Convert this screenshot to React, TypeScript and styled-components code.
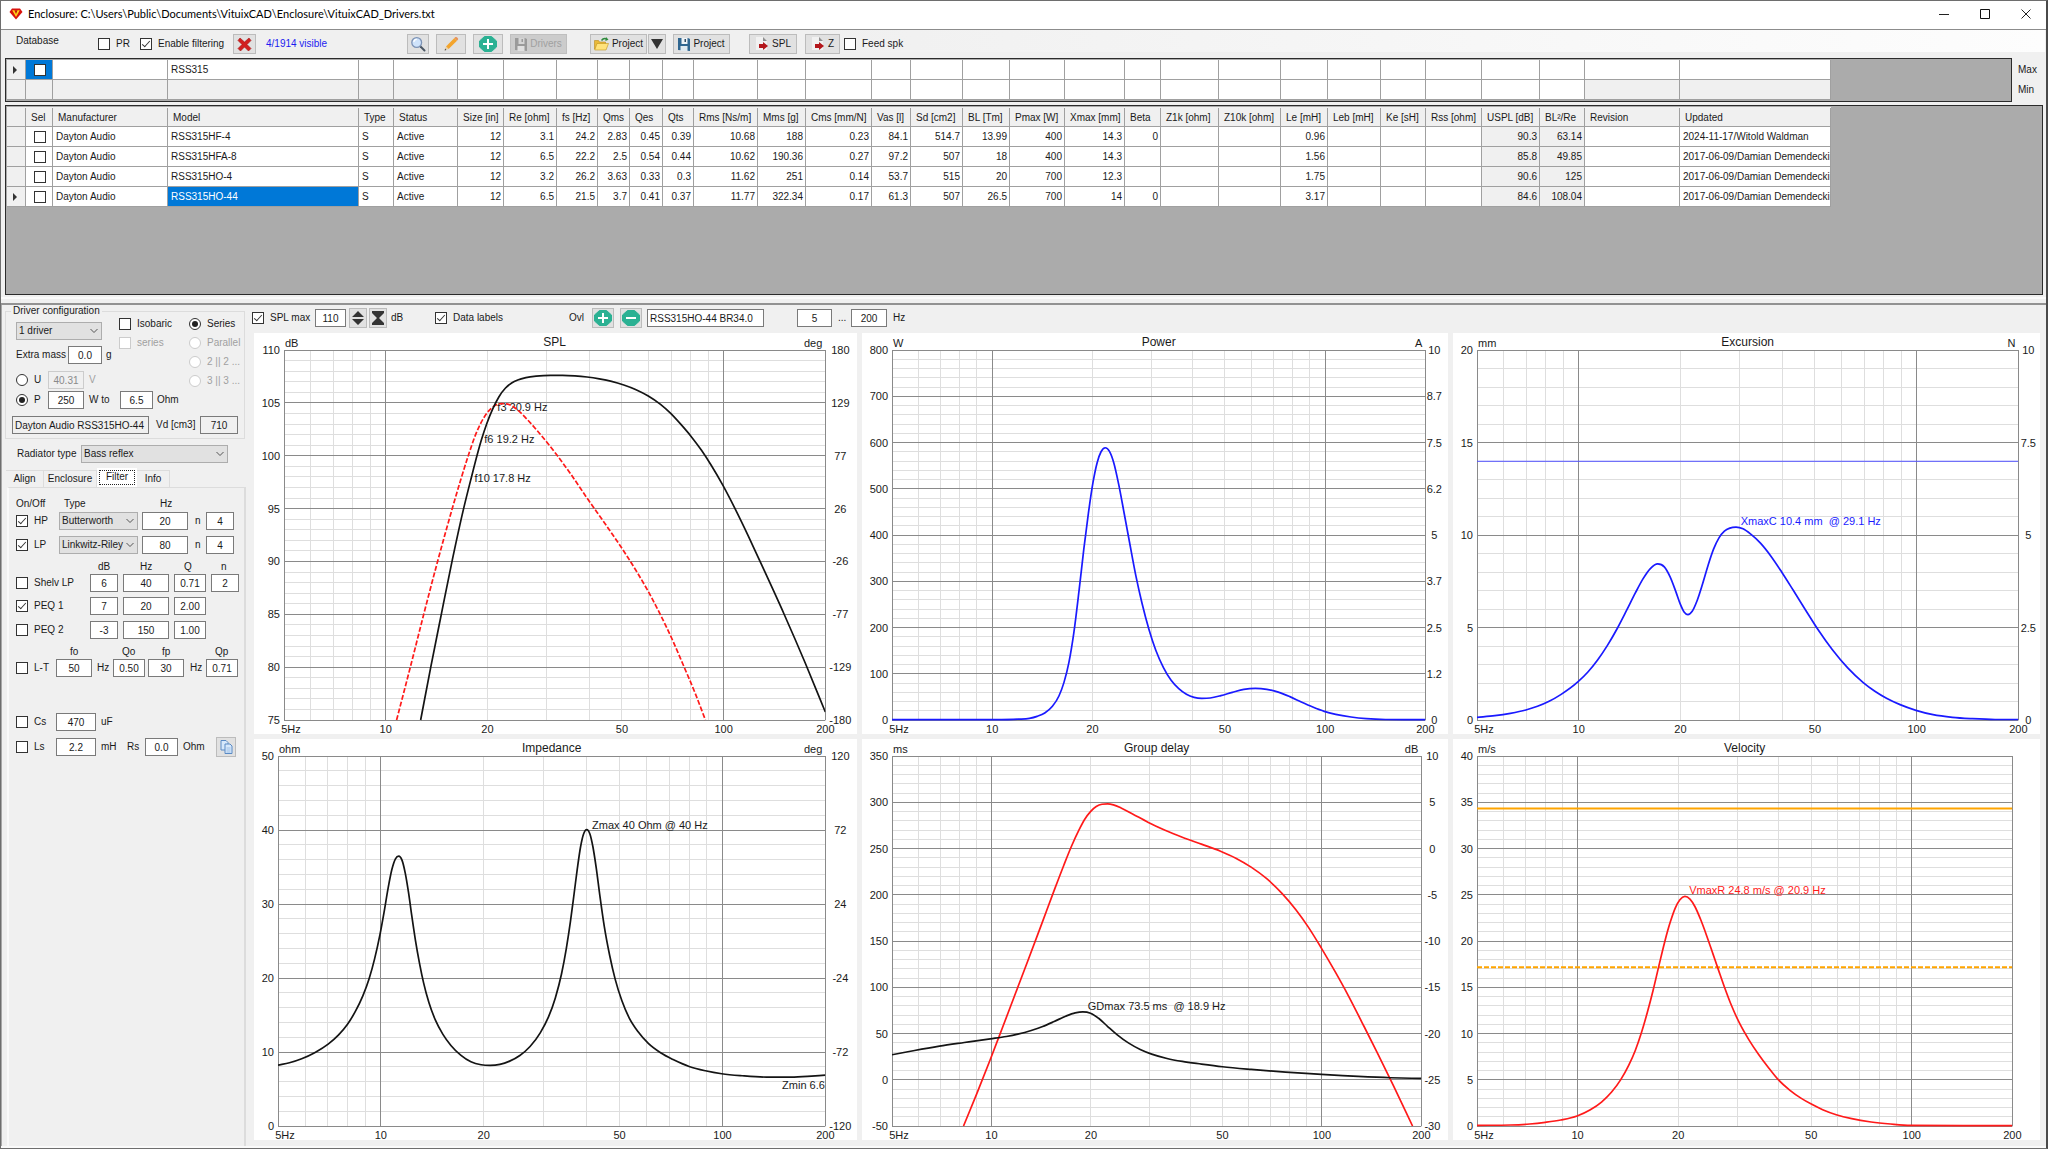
import React, { useLayoutEffect, useRef, useState } from "react";
import styled, { createGlobalStyle, css } from "styled-components";

/* ---------- base ---------- */

const GlobalStyle = createGlobalStyle`
  *, *::before, *::after { box-sizing: border-box; }
  body {
    margin: 0;
    background: #f0f0f0;
    color: #1a1a1a;
    font: 10px/12px "Liberation Sans", Arial, sans-serif;
  }
  button, input, select { font: inherit; color: inherit; margin: 0; }
`;

const Window = styled.div`
  min-height: 100vh;
  display: flex;
  flex-direction: column;
  background: #f0f0f0;
  border: 1px solid #6e6e6e;
  border-right: 2px solid #4a4a4a;
  overflow: hidden;
`;

/* ---------- title bar ---------- */

const TitleBar = styled.header`
  display: flex;
  align-items: center;
  height: 29px;
  padding: 0 0 2px 8px;
  background: #fff;
  border-bottom: 1px solid #8c8c8c;
`;

const Title = styled.h1`
  flex: 1;
  margin: 0 0 0 5px;
  font: 400 11px/14px Lato, "Open Sans", sans-serif;
  color: #000;
  white-space: nowrap;
`;

const CaptionButton = styled.button`
  width: 41px;
  height: 26px;
  padding: 0;
  border: 0;
  background: none;
  display: grid;
  place-items: center;
`;

/* ---------- shared controls ---------- */

const Tracks = styled.div<{ $cols: string; $mt?: number; $h?: number }>`
  display: grid;
  grid-template-columns: ${(p) => p.$cols};
  align-items: center;
  height: ${(p) => p.$h ?? 18}px;
  margin-top: ${(p) => p.$mt ?? 0}px;
  white-space: nowrap;
`;

const ToolButton = styled.button<{ $w: number; $h?: number }>`
  width: ${(p) => p.$w}px;
  height: ${(p) => p.$h ?? 20}px;
  padding: 0;
  display: flex;
  align-items: center;
  justify-content: center;
  gap: 3px;
  border: 1px solid #bcbcbc;
  background: #e1e1e1;
  white-space: nowrap;
  &:disabled {
    color: #a0a0a0;
    background: #cccccc;
    border-color: #bfbfbf;
  }
`;

const Field = styled.input<{ $w: number; $left?: boolean }>`
  width: ${(p) => p.$w}px;
  height: 18px;
  padding: 0 2px;
  border: 1px solid #7a7a7a;
  border-radius: 0;
  background: #fff;
  text-align: ${(p) => (p.$left ? "left" : "center")};
  outline: none;
  &:read-only { background: #f0f0f0; }
  &:disabled {
    background: #f0f0f0;
    border-color: #cccccc;
    color: #8a8a8a;
  }
`;

const TickBox = styled.input.attrs({ type: "checkbox" })`
  appearance: none;
  flex: none;
  display: grid;
  place-items: center;
  width: 12px;
  height: 12px;
  border: 1px solid #333;
  background: #fff;
  &:checked::before {
    content: "";
    width: 4px;
    height: 8px;
    margin-top: -2px;
    border: solid #333;
    border-width: 0 1px 1px 0;
    transform: rotate(42deg);
  }
  &:disabled { border-color: #cccccc; }
`;

const RadioDot = styled.input.attrs({ type: "radio" })`
  appearance: none;
  flex: none;
  display: grid;
  place-items: center;
  width: 12px;
  height: 12px;
  border: 1px solid #333;
  border-radius: 50%;
  background: #fff;
  &:checked::before {
    content: "";
    width: 6px;
    height: 6px;
    border-radius: 50%;
    background: #222;
  }
  &:disabled { border-color: #cccccc; }
`;

const ChoiceLabel = styled.label<{ $off?: boolean }>`
  display: flex;
  align-items: center;
  gap: 6px;
  height: 12px;
  white-space: nowrap;
  color: ${(p) => (p.$off ? "#a0a0a0" : "inherit")};
`;

const Check = ({ text, on, off }: { text: string; on?: boolean; off?: boolean }) => (
  <ChoiceLabel $off={off}>
    <TickBox defaultChecked={on} disabled={off} />
    {text}
  </ChoiceLabel>
);

const Radio = ({ text, name, on, off }: { text: string; name: string; on?: boolean; off?: boolean }) => (
  <ChoiceLabel $off={off}>
    <RadioDot name={name} defaultChecked={on} disabled={off} />
    {text}
  </ChoiceLabel>
);

const SelectFrame = styled.span<{ $w: number }>`
  position: relative;
  display: block;
  width: ${(p) => p.$w}px;
  height: 18px;
  select {
    appearance: none;
    width: 100%;
    height: 100%;
    padding: 0 2px;
    border: 1px solid #adadad;
    border-radius: 0;
    background: #e1e1e1;
  }
  svg {
    position: absolute;
    right: 4px;
    top: 6px;
    pointer-events: none;
  }
`;

const Dropdown = ({ w, label, value }: { w: number; label: string; value: string }) => (
  <SelectFrame $w={w}>
    <select aria-label={label} defaultValue={value}>
      <option>{value}</option>
    </select>
    <svg width="8" height="6" viewBox="0 0 8 6">
      <path d="M.5 1 4 4.5 7.5 1" fill="none" stroke="#555" />
    </svg>
  </SelectFrame>
);

/* ---------- icons ---------- */

const Logo = () => (
  <svg width="14" height="12" viewBox="0 0 14 12">
    <path d="M3 .5h8L13.5 4 7 11.5.5 4Z" fill="#d8120c" />
    <path d="M3.2 2.2h7.6L7 9Z" fill="#ffd21a" />
    <path d="M5.4 2.2 7 6l1.6-3.8Z" fill="#c2130c" />
  </svg>
);
const CrossIcon = () => (
  <svg width="15" height="15" viewBox="0 0 15 15">
    <path d="M3 1 7.5 5 12 1l2 2.5-4 4 4 4L11.5 14l-4-4-4 4L1 11.5l4-4-4-4Z" fill="#d21f1f" stroke="#a31212" strokeWidth=".6" />
  </svg>
);
const SearchIcon = () => (
  <svg width="16" height="16" viewBox="0 0 16 16">
    <path d="m10.5 10.5 4 4" stroke="#4a5663" strokeWidth="2" strokeLinecap="round" />
    <circle cx="6.7" cy="6.5" r="4.9" fill="#cfe3fb" stroke="#7d93b5" strokeWidth="1.3" />
    <path d="M3.8 6a3 3 0 0 1 3-2.6" fill="none" stroke="#fff" strokeWidth="1.2" />
  </svg>
);
const PencilIcon = () => (
  <svg width="16" height="16" viewBox="0 0 16 16">
    <path d="m3 10.5 8.4-8.4 2.6 2.6-8.4 8.4Z" fill="#f3a42c" />
    <path d="m11.4 2.1 1-1q.8-.5 1.5.2l1 1q.6.7 0 1.4l-.9 1Z" fill="#e8935a" />
    <path d="m3 10.5 2.6 2.6-4 1.300Z" fill="#e9cfa5" />
    <path d="m1.6 14.4.5-1.8 1.3 1.3Z" fill="#444" />
  </svg>
);
const RoundIcon = ({ plus }: { plus?: boolean }) => (
  <svg width="18" height="16" viewBox="0 0 18 16">
    <path d="M5.5.5h7L17.500 5v6l-5 4.500h-7L.500 11V5Z" fill="#2bb193" stroke="#2bb193" strokeLinejoin="round" />
    <path d={plus ? "M4 8h10M9 3v10" : "M4 8h10"} stroke="#fff" strokeWidth="2" />
  </svg>
);
const DiskIcon = ({ off }: { off?: boolean }) => (
  <svg width="12" height="14" viewBox="0 0 12 14">
    <path d="M0 1h10l2 1v12L0 13Z" fill={off ? "#9a9a9a" : "#2f6690"} />
    <path d="M3.500 1h6v6h-6Z" fill={off ? "#d5d5d5" : "#eef3f7"} />
    <path d="M6.500 2h1.500v3H6.500Z" fill={off ? "#9a9a9a" : "#2f4a60"} />
    <path d="M2.500 9h7v5h-7Z" fill={off ? "#e0e0e0" : "#dfe9f0"} />
  </svg>
);
const FolderIcon = () => (
  <svg width="15" height="14" viewBox="0 0 15 14">
    <path d="M.5 3.500h4l1 1.500h6V12H.500Z" fill="#e9b93a" stroke="#b98a1c" strokeWidth=".6" />
    <path d="M3 6.500h11.500L12 13H.700Z" fill="#ffe27a" stroke="#c1941f" strokeWidth=".6" />
    <path d="M7.500 3.500Q9.500.500 13 2" fill="none" stroke="#2f8b3c" strokeWidth="1.400" />
    <path d="m12 0 2.500 2.800L11.300 4Z" fill="#2f8b3c" />
  </svg>
);
const ExportIcon = () => (
  <svg width="14" height="14" viewBox="0 0 14 14">
    <path d="M1 0h7l4 4v9H1Z" fill="#f1f1f1" />
    <path d="M8 0v4h4Z" fill="#8f8f8f" />
    <path d="M4 7h4V5l5 4-5 4v-2H4Z" fill="#b3161b" />
  </svg>
);
const CopyIcon = () => (
  <svg width="13" height="14" viewBox="0 0 13 14">
    <path d="M1 .500h5L8 2.500V10H1Z" fill="#d6e8fb" stroke="#5a8ac4" />
    <path d="M5 4h5l2 2v7.500H5Z" fill="#d6e8fb" stroke="#5a8ac4" />
    <path d="M6.500 8h4M6.500 10h4M6.500 12h4" stroke="#8fb4e0" strokeWidth=".8" />
  </svg>
);

/* ---------- database toolbar ---------- */

const DatabaseBar = styled(Tracks)`
  flex: none;
  padding-left: 15px;
  margin-right: 1px;
  background: linear-gradient(90deg, #f0f0f0 40%, #fdfdfd) no-repeat 0 0 / 100% 22px;
`;

const Caption = styled.span`
  align-self: start;
  margin-top: 5px;
`;

const Visible = styled.output`
  color: #1c1cf0;
`;

/* ---------- driver tables ---------- */

type Column = { label: string; w: number; num?: boolean; shade?: boolean };

const columns: Column[] = [
  { label: "Sel", w: 27 },
  { label: "Manufacturer", w: 115 },
  { label: "Model", w: 191 },
  { label: "Type", w: 35 },
  { label: "Status", w: 64 },
  { label: "Size [in]", w: 46, num: true },
  { label: "Re [ohm]", w: 53, num: true },
  { label: "fs [Hz]", w: 41, num: true },
  { label: "Qms", w: 32, num: true },
  { label: "Qes", w: 33, num: true },
  { label: "Qts", w: 31, num: true },
  { label: "Rms [Ns/m]", w: 64, num: true },
  { label: "Mms [g]", w: 48, num: true },
  { label: "Cms [mm/N]", w: 66, num: true },
  { label: "Vas [l]", w: 39, num: true },
  { label: "Sd [cm2]", w: 52, num: true },
  { label: "BL [Tm]", w: 47, num: true },
  { label: "Pmax [W]", w: 55, num: true },
  { label: "Xmax [mm]", w: 60, num: true },
  { label: "Beta", w: 36, num: true },
  { label: "Z1k [ohm]", w: 58, num: true },
  { label: "Z10k [ohm]", w: 62, num: true },
  { label: "Le [mH]", w: 47, num: true },
  { label: "Leb [mH]", w: 53, num: true },
  { label: "Ke [sH]", w: 45, num: true },
  { label: "Rss [ohm]", w: 56, num: true },
  { label: "USPL [dB]", w: 58, num: true, shade: true },
  { label: "BL²/Re", w: 45, num: true, shade: true },
  { label: "Revision", w: 95 },
  { label: "Updated", w: 151 },
];

const drivers: string[][] = [
  ["Dayton Audio", "RSS315HF-4", "S", "Active", "12", "3.1", "24.2", "2.83", "0.45", "0.39", "10.68", "188", "0.23", "84.1", "514.7", "13.99", "400", "14.3", "0", "", "", "0.96", "", "", "", "90.3", "63.14", "", "2024-11-17/Witold Waldman"],
  ["Dayton Audio", "RSS315HFA-8", "S", "Active", "12", "6.5", "22.2", "2.5", "0.54", "0.44", "10.62", "190.36", "0.27", "97.2", "507", "18", "400", "14.3", "", "", "", "1.56", "", "", "", "85.8", "49.85", "", "2017-06-09/Damian Demendecki"],
  ["Dayton Audio", "RSS315HO-4", "S", "Active", "12", "3.2", "26.2", "3.63", "0.33", "0.3", "11.62", "251", "0.14", "53.7", "515", "20", "700", "12.3", "", "", "", "1.75", "", "", "", "90.6", "125", "", "2017-06-09/Damian Demendecki"],
  ["Dayton Audio", "RSS315HO-44", "S", "Active", "12", "6.5", "21.5", "3.7", "0.41", "0.37", "11.77", "322.34", "0.17", "61.3", "507", "26.5", "700", "14", "0", "", "", "3.17", "", "", "", "84.6", "108.04", "", "2017-06-09/Damian Demendecki"],
];

const FilterArea = styled.div`
  display: flex;
  gap: 6px;
  margin-left: 4px;
`;

const GridFrame = styled.div<{ $h: number }>`
  flex: 1;
  height: ${(p) => p.$h}px;
  padding: 1px;
  border: 1px solid #2b2b2b;
  background: #ababab;
  overflow: hidden;
`;

const DriverFrame = styled(GridFrame)`
  flex: none;
  margin: 3px 3px 0 4px;
`;

const Limits = styled.div`
  display: grid;
  grid-template-rows: 20px 20px;
  align-content: center;
  align-items: center;
  width: 28px;
`;

const Sheet = styled.table`
  table-layout: fixed;
  width: 1824px;
  border-collapse: separate;
  border-spacing: 0;
`;

const line = "#a0a0a0";

const HeadCell = styled.th`
  height: 20px;
  padding: 2px 0 0 5px;
  text-align: left;
  font-weight: 400;
  white-space: nowrap;
  background: linear-gradient(${line}, ${line}) no-repeat 100% 100% / 1px 18px #f0f0f0;
  border-bottom: 1px solid ${line};
`;

const Cell = styled.td<{ $num?: boolean; $shade?: boolean; $picked?: boolean }>`
  height: 20px;
  padding: 0 2px 0 3px;
  white-space: nowrap;
  border-right: 1px solid ${line};
  border-bottom: 1px solid ${line};
  text-align: ${(p) => (p.$num ? "right" : "left")};
  background: ${(p) => (p.$shade ? "#f0f0f0" : "#fff")};
  ${(p) => p.$picked && css`background: #0078d7; color: #fff;`}
  input { margin: 0 auto; }
`;

const Marker = styled.svg`
  display: block;
  margin: 0 auto;
`;

const RowMark = ({ on }: { on?: boolean }) => (
  <Cell as="th" $shade>
    {on && (
      <Marker width="8" height="8" viewBox="0 0 8 8">
        <path d="M0 0v8l4-4Z" fill="#333" />
      </Marker>
    )}
  </Cell>
);

const Columns = () => (
  <colgroup>
    <col style={{ width: 19 }} />
    {columns.map((c) => (
      <col key={c.label} style={{ width: c.w }} />
    ))}
  </colgroup>
);

const FilterTable = () => (
  <Sheet aria-label="Filter limits">
    <Columns />
    <tbody>
      <tr>
        <RowMark on />
        <Cell $picked><TickBox aria-label="Filter selected" /></Cell>
        {columns.slice(1).map((c) => (
          <Cell key={c.label}>{c.label === "Model" ? "RSS315" : ""}</Cell>
        ))}
      </tr>
      <tr>
        <RowMark />
        {columns.map((c) => (
          <Cell key={c.label} $shade={!c.num} />
        ))}
      </tr>
    </tbody>
  </Sheet>
);

const DriverTable = () => (
  <Sheet aria-label="Drivers">
    <Columns />
    <thead>
      <tr>
        <HeadCell />
        {columns.map((c) => (
          <HeadCell key={c.label} scope="col">{c.label}</HeadCell>
        ))}
      </tr>
    </thead>
    <tbody>
      {drivers.map((d) => {
        const current = d[1] === "RSS315HO-44";
        return (
          <tr key={d[1]}>
            <RowMark on={current} />
            <Cell><TickBox aria-label={`Select ${d[1]}`} /></Cell>
            {d.map((v, i) => (
              <Cell key={i} $num={columns[i + 1].num} $shade={columns[i + 1].shade} $picked={current && i === 1}>
                {v}
              </Cell>
            ))}
          </tr>
        );
      })}
    </tbody>
  </Sheet>
);

/* ---------- lower half ---------- */

const Splitter = styled.div`
  flex: none;
  height: 10px;
  border-bottom: 2px solid #929292;
  background: linear-gradient(#f0f0f0 2px, #fbfbfb 2px, #fbfbfb 4px, #f0f0f0 4px);
`;

const Lower = styled.main`
  flex: 1;
  display: grid;
  grid-template-columns: 250px minmax(0, 1fr);
  border-left: 1px solid #a8a8a8;
`;

const Sidebar = styled.aside`
  display: flex;
  flex-direction: column;
  padding: 0 0 0 3px;
`;

const Group = styled.fieldset`
  margin: 0;
  width: 240px;
  height: 134px;
  padding: 5px 0 0 10px;
  border: 1px solid #dcdcdc;
  legend {
    height: 12px;
    margin-left: -5px;
    padding: 0 2px;
  }
`;

const DriverSetup = styled.div`
  display: grid;
  grid-template-columns: 103px 70px 1fr;
`;

const ChoiceColumn = styled.div`
  display: flex;
  flex-direction: column;
  gap: 7px;
  margin-top: -4px;
`;

const TabList = styled.div`
  display: flex;
  align-items: flex-end;
  height: 19px;
  margin: 5px 0 0 1px;
`;

const Tab = styled.button<{ $w: number; $open?: boolean }>`
  width: ${(p) => p.$w}px;
  height: 17px;
  padding: 0;
  border: 1px solid #dcdcdc;
  border-width: 1px 1px 0 0;
  background: #f0f0f0;
  white-space: nowrap;
  ${(p) => p.$open && css`
    height: 19px;
    padding-bottom: 2px;
    background: #fff;
    border: 1px solid #fff;
    outline: 1px dotted #222;
    outline-offset: -3px;
  `}
`;

const TabPage = styled.section`
  flex: 1;
  width: 239px;
  padding: 10px 0 0 7px;
  margin-left: 2px;
  border: 1px solid #dcdcdc;
  border-width: 1px 2px 0 2px;
  border-left-color: #fafafa;
`;

const Muted = styled.span`
  color: #a0a0a0;
`;

const DriverName = styled(Tracks)`
  margin-left: -4px;
`;

const RadiatorRow = styled(Tracks)`
  padding-left: 12px;
`;

const DriverConfig = () => (
  <Group>
    <legend>Driver configuration</legend>
    <DriverSetup>
      <div>
        <Dropdown w={86} label="Driver count" value="1 driver" />
        <Tracks $cols="52px 38px 1fr" $mt={6}>
          <label htmlFor="extra">Extra mass</label>
          <Field id="extra" $w={34} defaultValue="0.0" />
          <span>g</span>
        </Tracks>
        <Tracks $cols="32px 41px 1fr" $mt={7}>
          <Radio name="drive" text="U" />
          <Field $w={36} defaultValue="40.31" disabled aria-label="Voltage" />
          <Muted>V</Muted>
        </Tracks>
      </div>
      <ChoiceColumn>
        <Check text="Isobaric" />
        <Check text="series" off />
      </ChoiceColumn>
      <ChoiceColumn>
        <Radio name="wiring" text="Series" on />
        <Radio name="wiring" text="Parallel" off />
        <Radio name="wiring" text="2 || 2 ..." off />
        <Radio name="wiring" text="3 || 3 ..." off />
      </ChoiceColumn>
    </DriverSetup>
    <Tracks $cols="32px 41px 31px 37px 1fr" $mt={2}>
      <Radio name="drive" text="P" on />
      <Field $w={36} defaultValue="250" aria-label="Power" />
      <span>W to</span>
      <Field $w={33} defaultValue="6.5" aria-label="Load" />
      <span>Ohm</span>
    </Tracks>
    <DriverName $cols="144px 44px 1fr" $mt={7}>
      <Field $w={137} $left readOnly value="Dayton Audio RSS315HO-44" aria-label="Driver" />
      <label htmlFor="vd">Vd [cm3]</label>
      <Field id="vd" $w={38} readOnly value="710" />
    </DriverName>
  </Group>
);

const FilterPage = () => (
  <TabPage role="tabpanel" aria-label="Filter">
    <Tracks $cols="48px 96px 1fr" $h={12}>
      <span>On/Off</span>
      <span>Type</span>
      <span>Hz</span>
    </Tracks>
    <Tracks $cols="43px 83px 53px 11px 1fr" $mt={2}>
      <Check text="HP" on />
      <Dropdown w={79} label="High pass type" value="Butterworth" />
      <Field $w={46} defaultValue="20" aria-label="High pass Hz" />
      <span>n</span>
      <Field $w={28} defaultValue="4" aria-label="High pass order" />
    </Tracks>
    <Tracks $cols="43px 83px 53px 11px 1fr" $mt={6}>
      <Check text="LP" on />
      <Dropdown w={79} label="Low pass type" value="Linkwitz-Riley" />
      <Field $w={46} defaultValue="80" aria-label="Low pass Hz" />
      <span>n</span>
      <Field $w={28} defaultValue="4" aria-label="Low pass order" />
    </Tracks>
    <Tracks $cols="82px 42px 44px 37px 1fr" $h={12} $mt={7}>
      <span />
      <span>dB</span>
      <span>Hz</span>
      <span>Q</span>
      <span>n</span>
    </Tracks>
    <Tracks $cols="74px 33px 51px 37px 1fr" $mt={1}>
      <Check text="Shelv LP" />
      <Field $w={28} defaultValue="6" aria-label="Shelving dB" />
      <Field $w={46} defaultValue="40" aria-label="Shelving Hz" />
      <Field $w={32} defaultValue="0.71" aria-label="Shelving Q" />
      <Field $w={28} defaultValue="2" aria-label="Shelving order" />
    </Tracks>
    <Tracks $cols="74px 33px 51px 37px" $mt={5}>
      <Check text="PEQ 1" on />
      <Field $w={28} defaultValue="7" aria-label="PEQ 1 dB" />
      <Field $w={46} defaultValue="20" aria-label="PEQ 1 Hz" />
      <Field $w={32} defaultValue="2.00" aria-label="PEQ 1 Q" />
    </Tracks>
    <Tracks $cols="74px 33px 51px 37px" $mt={6}>
      <Check text="PEQ 2" />
      <Field $w={28} defaultValue="-3" aria-label="PEQ 2 dB" />
      <Field $w={46} defaultValue="150" aria-label="PEQ 2 Hz" />
      <Field $w={32} defaultValue="1.00" aria-label="PEQ 2 Q" />
    </Tracks>
    <Tracks $cols="54px 52px 40px 53px 1fr" $h={12} $mt={7}>
      <span />
      <span>fo</span>
      <span>Qo</span>
      <span>fp</span>
      <span>Qp</span>
    </Tracks>
    <Tracks $cols="40px 41px 16px 35px 42px 16px 1fr" $mt={1}>
      <Check text="L-T" />
      <Field $w={36} defaultValue="50" aria-label="fo" />
      <span>Hz</span>
      <Field $w={32} defaultValue="0.50" aria-label="Qo" />
      <Field $w={36} defaultValue="30" aria-label="fp" />
      <span>Hz</span>
      <Field $w={32} defaultValue="0.71" aria-label="Qp" />
    </Tracks>
    <Tracks $cols="40px 45px 1fr" $mt={36}>
      <Check text="Cs" />
      <Field $w={40} defaultValue="470" aria-label="Series capacitance" />
      <span>uF</span>
    </Tracks>
    <Tracks $cols="40px 45px 26px 18px 38px 33px 1fr" $mt={6}>
      <Check text="Ls" />
      <Field $w={40} defaultValue="2.2" aria-label="Series inductance" />
      <span>mH</span>
      <label htmlFor="rs">Rs</label>
      <Field id="rs" $w={33} defaultValue="0.0" />
      <span>Ohm</span>
      <ToolButton $w={20} aria-label="Copy filter"><CopyIcon /></ToolButton>
    </Tracks>
  </TabPage>
);

/* ---------- charts ---------- */

const ChartArea = styled.section`
  display: flex;
  flex-direction: column;
  padding: 3px 6px 6px 0;
`;

const ChartGrid = styled.div`
  flex: 1;
  display: grid;
  grid-template-columns: 603fr 585fr 587fr;
  grid-template-rows: 1fr 1fr;
  gap: 5px;
  margin: 5px 0 0 2px;
`;

const ChartPanel = styled.figure`
  margin: 0;
  min-width: 0;
  min-height: 0;
  display: flex;
  background: #fff;
  svg { flex: 1; width: 0; display: block; }
  text {
    font: 11px "Liberation Sans", Arial, sans-serif;
    fill: #1a1a1a;
    white-space: pre;
  }
  text.title { font-size: 12px; }
`;

type Pt = [number, number];
type Trace = { color: string; dash?: string; width?: number; pts: Pt[] };
type Note = { text: string; x: number; y: number; color?: string };
type ChartSpec = {
  title: string;
  leftUnit: string;
  rightUnit?: string;
  left: string[];
  right?: string[];
  minor: number;
  pad: { l: number; r: number };
  rightAt: number;
  frame: [number, number, number, number]; // coordinate space of traces and notes
  traces: Trace[];
  notes: Note[];
};

/** Cubic path through points with increasing x; parabolic slopes, limited so that it cannot overshoot. */
function smooth(p: Pt[]): string {
  const n = p.length;
  const d: number[] = [];
  for (let i = 0; i < n - 1; i++) d.push((p[i + 1][1] - p[i][1]) / (p[i + 1][0] - p[i][0]));
  const m = p.map((_, i) => {
    if (i === 0) return d[0];
    if (i === n - 1) return d[n - 2];
    const a = d[i - 1];
    const b = d[i];
    if (a * b <= 0) return 0;
    const h0 = p[i][0] - p[i - 1][0];
    const h1 = p[i + 1][0] - p[i][0];
    const s = (a * h1 + b * h0) / (h0 + h1);
    return Math.sign(s) * Math.min(Math.abs(s), 3 * Math.abs(a), 3 * Math.abs(b));
  });
  let out = `M${p[0][0].toFixed(2)} ${p[0][1].toFixed(2)}`;
  for (let i = 0; i < n - 1; i++) {
    const h = (p[i + 1][0] - p[i][0]) / 3;
    out += `C${[
      p[i][0] + h, p[i][1] + m[i] * h,
      p[i + 1][0] - h, p[i + 1][1] - m[i + 1] * h,
      p[i + 1][0], p[i + 1][1],
    ].map((v) => v.toFixed(2)).join(" ")}`;
  }
  return out;
}

const freqMinor = [6, 7, 8, 9, 20, 30, 40, 50, 60, 70, 80, 90];
const freqMajor = [5, 10, 100, 200];
const freqLabels = [10, 20, 50, 100, 200];
const logPos = (f: number) => Math.log(f / 5) / Math.log(40);
const crisp = (v: number) => Math.floor(v) + 0.5;

const Chart = ({ spec }: { spec: ChartSpec }) => {
  const ref = useRef<SVGSVGElement>(null);
  const [size, setSize] = useState({ w: 600, h: 400 });
  useLayoutEffect(() => {
    const el = ref.current;
    if (!el) return;
    const measure = () => {
      const r = el.getBoundingClientRect();
      setSize({ w: r.width, h: r.height });
    };
    measure();
    const watcher = new ResizeObserver(measure);
    watcher.observe(el);
    return () => watcher.disconnect();
  }, []);

  const l = spec.pad.l;
  const r = size.w - spec.pad.r;
  const t = 17;
  const b = size.h - 14;
  const fx = (f: number) => l + (r - l) * logPos(f);
  const steps = spec.left.length - 1;
  const fy = (i: number) => t + ((b - t) * i) / steps;
  const [x0, y0, x1, y1] = spec.frame;
  const px = (x: number) => l + ((x - x0) / (x1 - x0)) * (r - l);
  const py = (y: number) => t + ((y - y0) / (y1 - y0)) * (b - t);
  const clip = `clip-${spec.title.replace(" ", "-")}`;

  const minorRows: number[] = [];
  for (let i = 0; i < steps * spec.minor; i++) if (i % spec.minor) minorRows.push(i / spec.minor);

  return (
    <ChartPanel>
      <svg ref={ref} role="img" aria-label={`${spec.title} chart`}>
        <clipPath id={clip}>
          <rect x={l} y={t} width={Math.max(0, r - l)} height={Math.max(0, b - t + 1)} />
        </clipPath>
        <g stroke="#dedede">
          {minorRows.map((i) => <path key={i} d={`M${l} ${crisp(fy(i))}H${r}`} />)}
          {freqMinor.map((f) => <path key={f} d={`M${crisp(fx(f))} ${t}V${b}`} />)}
        </g>
        <g stroke="#8a8a8a">
          {spec.left.map((v, i) => <path key={v} d={`M${l} ${crisp(fy(i))}H${r}`} />)}
          {freqMajor.map((f) => <path key={f} d={`M${crisp(fx(f))} ${t}V${b}`} />)}
        </g>
        {spec.left.map((v, i) => (
          <text key={v} x={l - 4} y={fy(i) + 4} textAnchor="end">{v}</text>
        ))}
        {spec.right?.map((v, i, all) => (
          <text key={v} x={r + spec.rightAt} y={t + ((b - t) * i) / (all.length - 1) + 4} textAnchor="middle">{v}</text>
        ))}
        <text x={l + 7} y={b + 13} textAnchor="middle">5Hz</text>
        {freqLabels.map((f) => (
          <text key={f} x={fx(f)} y={b + 13} textAnchor="middle">{f}</text>
        ))}
        <text x={l + 1} y={t - 3}>{spec.leftUnit}</text>
        <text className="title" x={(l + r) / 2} y={t - 4} textAnchor="middle">{spec.title}</text>
        {spec.rightUnit && <text x={r - 3} y={t - 3} textAnchor="end">{spec.rightUnit}</text>}
        {spec.notes.map((n) => (
          <text key={n.text} x={px(n.x)} y={py(n.y) + 4} style={{ fill: n.color }}>{n.text}</text>
        ))}
        <g clipPath={`url(#${clip})`}>
          {spec.traces.map((tr, i) => (
            <path
              key={i}
              d={smooth(tr.pts.map(([x, y]) => [px(x), py(y)] as Pt))}
              fill="none"
              stroke={tr.color}
              strokeWidth={tr.width ?? 1.7}
              strokeDasharray={tr.dash}
            />
          ))}
        </g>
      </svg>
    </ChartPanel>
  );
};

const black = "#141414";
const red = "#ff1a1a";
const blue = "#1a1aff";
const orange = "#ffa500";

const charts: ChartSpec[] = [
  {
    title: "SPL", leftUnit: "dB", rightUnit: "deg",
    left: ["110", "105", "100", "95", "90", "85", "80", "75"],
    right: ["180", "129", "77", "26", "-26", "-77", "-129", "-180"],
    minor: 5, pad: { l: 30, r: 32 }, rightAt: 15,
    frame: [107, 153, 1434, 1262],
    traces: [
      { color: red, dash: "5 2", pts: [[383, 1262], [417, 1102], [450, 943], [485, 780], [520, 626], [540, 543], [560, 465], [575, 412], [590, 371], [605, 341], [621, 322], [640, 314], [660, 317], [680, 333], [700, 357], [730, 398], [776, 468], [810, 525], [850, 597], [900, 684], [950, 775], [1000, 877], [1030, 947], [1060, 1024], [1085, 1095], [1115, 1182], [1140, 1262]] },
      { color: black, pts: [[442, 1262], [467, 1102], [493, 943], [520, 780], [547, 630], [564, 546], [591, 422], [604, 374], [619, 329], [634, 293], [650, 267], [665, 252], [680, 243], [700, 236], [725, 231.5], [760, 229], [790, 229], [820, 230.5], [850, 234], [880, 239.5], [910, 247], [940, 258], [970, 272], [1000, 291], [1030, 316], [1055, 343], [1080, 376], [1105, 412], [1130, 453], [1155, 500], [1183, 559], [1212, 627], [1245, 710], [1276, 792], [1333, 945], [1385, 1092], [1434, 1238]] },
    ],
    notes: [
      { text: "f3 20.9 Hz", x: 630, y: 323 },
      { text: "f6 19.2 Hz", x: 598, y: 421 },
      { text: "f10 17.8 Hz", x: 574, y: 538 },
    ],
  },
  {
    title: "Power", leftUnit: "W", rightUnit: "A",
    left: ["800", "700", "600", "500", "400", "300", "200", "100", "0"],
    right: ["10", "8.7", "7.5", "6.2", "5", "3.7", "2.5", "1.2", "0"],
    minor: 5, pad: { l: 30, r: 22 }, rightAt: 9,
    frame: [111, 93, 1504, 1202],
    traces: [
      { color: blue, pts: [[111, 1201], [380, 1201], [440, 1199.5], [470, 1197], [490, 1191], [510, 1181], [530, 1161], [547, 1130], [560, 1090], [573, 1030], [586, 940], [600, 810], [612, 690], [624, 582], [636, 490], [647, 430], [657, 398], [668, 386], [679, 397], [690, 430], [703, 495], [717, 580], [732, 673], [748, 770], [764, 852], [782, 930], [800, 993], [820, 1045], [840, 1083], [860, 1108], [880, 1125], [900, 1134], [920, 1137], [942, 1136], [970, 1129], [1000, 1119], [1030, 1110], [1060, 1107], [1090, 1110], [1120, 1118.500], [1150, 1132], [1180, 1148], [1210, 1163], [1240, 1176], [1270, 1185], [1310, 1193], [1350, 1198], [1400, 1200.5], [1504, 1201]] },
    ],
    notes: [],
  },
  {
    title: "Excursion", leftUnit: "mm", rightUnit: "N",
    left: ["20", "15", "10", "5", "0"],
    right: ["10", "7.5", "5", "2.5", "0"],
    minor: 5, pad: { l: 24, r: 22 }, rightAt: 10,
    frame: [94, 93, 1490, 1202],
    traces: [
      { color: "#5050ff", width: 1, pts: [[94, 426.5], [1490, 426.5]] },
      { color: blue, pts: [[94, 1194], [140, 1189], [180, 1182], [220, 1172], [250, 1161], [280, 1146], [310, 1126], [354, 1088], [380, 1058], [405, 1022], [430, 979], [456, 927], [480, 873], [502, 822], [522, 779], [541, 748], [560, 734], [577, 743], [592, 773], [607, 818], [618, 854], [628, 878], [638, 886], [649, 876], [662, 843], [676, 793], [690, 738], [704, 690], [718, 656], [732, 636], [746, 627], [762, 624], [780, 629], [800, 645], [825, 672], [852, 711], [880, 759], [910, 814], [940, 870], [975, 934], [1010, 991], [1050, 1046], [1090, 1090], [1120, 1116], [1150, 1137], [1185, 1156], [1226, 1173], [1270, 1186], [1320, 1194], [1370, 1198], [1430, 1200.5], [1490, 1200.5]] },
    ],
    notes: [{ text: "XmaxC 10.4 mm  @ 29.1 Hz", x: 774, y: 605, color: blue }],
  },
  {
    title: "Impedance", leftUnit: "ohm", rightUnit: "deg",
    left: ["50", "40", "30", "20", "10", "0"],
    right: ["120", "72", "24", "-24", "-72", "-120"],
    minor: 5, pad: { l: 24, r: 32 }, rightAt: 15,
    frame: [92, 78, 1434, 1190],
    traces: [
      { color: black, pts: [[92, 1007], [120, 1000], [150, 988], [183, 969], [215, 944], [240, 917], [262, 885], [282, 845], [300, 799], [315, 749], [329, 687], [342, 615], [352, 548], [362, 475], [371, 420], [380, 387], [388, 379], [396, 391], [404, 430], [412, 488], [420, 558], [429, 632], [439, 701], [449, 760], [462, 819], [478, 872], [496, 914], [516, 948], [540, 977], [565, 997], [590, 1006], [612, 1008], [636, 1005], [660, 995], [685, 978], [710, 951], [735, 910], [755, 863], [772, 805], [787, 734], [799, 656], [809, 576], [818, 492], [826, 416], [834, 350], [841, 313], [849, 299], [857, 313], [864, 350], [872, 412], [881, 496], [892, 590], [905, 676], [919, 750], [935, 813], [953, 865], [975, 907], [1000, 942], [1030, 970], [1062, 991], [1100, 1011], [1140, 1024], [1180, 1033], [1230, 1039], [1290, 1043], [1350, 1043], [1400, 1040], [1434, 1037]] },
    ],
    notes: [
      { text: "Zmax 40 Ohm @ 40 Hz", x: 862, y: 284 },
      { text: "Zmin 6.6", x: 1328, y: 1066 },
    ],
  },
  {
    title: "Group delay", leftUnit: "ms", rightUnit: "dB",
    left: ["350", "300", "250", "200", "150", "100", "50", "0", "-50"],
    right: ["10", "5", "0", "-5", "-10", "-15", "-20", "-25", "-30"],
    minor: 5, pad: { l: 30, r: 26 }, rightAt: 11,
    frame: [111, 78, 1495, 1190],
    traces: [
      { color: red, pts: [[298, 1190], [333, 1092], [368, 990], [398, 900], [430, 803], [465, 697], [500, 590], [535, 482], [560, 407], [580, 350], [600, 300], [615, 268], [630, 245], [645, 230], [660, 223], [675, 222], [690, 225], [710, 234], [740, 252], [780, 277], [825, 301], [870, 322], [920, 343], [970, 364], [1010, 385], [1050, 412], [1090, 446], [1130, 490], [1167, 540], [1200, 593], [1234, 656], [1270, 727], [1304, 798], [1340, 879], [1380, 970], [1422, 1069], [1472, 1190]] },
      { color: black, pts: [[111, 976], [170, 963], [235, 950], [300, 939], [368, 928], [410, 921], [440, 914], [475, 903], [505, 891], [535, 876], [565, 860], [590, 850], [610, 847], [630, 851], [652, 867], [675, 891], [700, 916], [730, 941], [760, 960], [790, 974], [830, 987], [870, 996], [920, 1004], [975, 1012], [1050, 1020], [1140, 1028], [1234, 1035], [1330, 1041], [1415, 1045], [1495, 1047]] },
    ],
    notes: [{ text: "GDmax 73.5 ms  @ 18.9 Hz", x: 623, y: 828 }],
  },
  {
    title: "Velocity", leftUnit: "m/s",
    left: ["40", "35", "30", "25", "20", "15", "10", "5", "0"],
    minor: 5, pad: { l: 24, r: 28 }, rightAt: 0,
    frame: [94, 78, 1474, 1190],
    traces: [
      { color: orange, width: 2, pts: [[94, 236], [1474, 236]] },
      { color: orange, width: 2, dash: "5 2", pts: [[94, 713], [1474, 713]] },
      { color: red, pts: [[94, 1188], [180, 1187], [230, 1184], [270, 1179], [310, 1172], [352, 1160], [385, 1142], [415, 1118], [441, 1088], [465, 1050], [485, 1008], [502, 963], [518, 909], [533, 849], [548, 782], [563, 708], [578, 636], [592, 578], [605, 535], [617, 510], [630, 500], [643, 508], [656, 531], [670, 568], [686, 618], [702, 672], [717, 723], [732, 773], [750, 828], [772, 884], [795, 931], [820, 975], [845, 1014], [870, 1050], [900, 1082], [930, 1107], [957, 1125], [985, 1141], [1020, 1156], [1060, 1168], [1110, 1178], [1160, 1184], [1212, 1188], [1474, 1189]] },
    ],
    notes: [{ text: "VmaxR 24.8 m/s @ 20.9 Hz", x: 641, y: 482, color: red }],
  },
];

const ChartBar = () => (
  <Tracks $cols="63px 34px 20px 22px 44px 134px 23px 28px 27px 150px 41px 13px 42px 1fr" $h={20}>
    <Check text="SPL max" on />
    <Field $w={31} defaultValue="110" aria-label="SPL max value" />
    <ToolButton $w={18} aria-label="Step SPL max">
      <svg width="12" height="16" viewBox="0 0 12 16"><path d="M0 7h12L6 1ZM0 9h12l-6 6Z" fill="#333" /></svg>
    </ToolButton>
    <ToolButton $w={18} aria-label="Fit SPL max">
      <svg width="12" height="16" viewBox="0 0 12 16"><path d="M0 1h12v2L7 8l5 5v2H0v-2l5-5L0 3Z" fill="#333" /></svg>
    </ToolButton>
    <span>dB</span>
    <Check text="Data labels" on />
    <label htmlFor="overlay">Ovl</label>
    <ToolButton $w={22} aria-label="Add overlay"><RoundIcon plus /></ToolButton>
    <ToolButton $w={22} aria-label="Remove overlay"><RoundIcon /></ToolButton>
    <Field id="overlay" $w={117} $left defaultValue="RSS315HO-44 BR34.0" />
    <Field $w={35} defaultValue="5" aria-label="Frequency from" />
    <span>...</span>
    <Field $w={36} defaultValue="200" aria-label="Frequency to" />
    <span>Hz</span>
  </Tracks>
);

const BottomEdge = styled.div`
  flex: none;
  height: 2px;
  background: #fafafa;
`;

export default function App() {
  return (
    <>
      <GlobalStyle />
      <Window>
        <TitleBar>
          <Logo />
          <Title>Enclosure: C:\Users\Public\Documents\VituixCAD\Enclosure\VituixCAD_Drivers.txt</Title>
          <CaptionButton aria-label="Minimize">
            <svg width="10" height="10" viewBox="0 0 10 10"><path d="M0 5.500h10" stroke="#222" /></svg>
          </CaptionButton>
          <CaptionButton aria-label="Maximize">
            <svg width="10" height="10" viewBox="0 0 10 10"><path d="M.500.500h9v9h-9Z" fill="none" stroke="#111" /></svg>
          </CaptionButton>
          <CaptionButton aria-label="Close">
            <svg width="10" height="10" viewBox="0 0 10 10"><path d="m.500.500 9 9m0-9-9 9" stroke="#222" /></svg>
          </CaptionButton>
        </TitleBar>
        <DatabaseBar
          $h={28}
          $cols="82px 42px 93px 33px 141px 29px 37px 37px 80px 58px 25px 76px 56px 39px 1fr"
        >
          <Caption>Database</Caption>
          <Check text="PR" />
          <Check text="Enable filtering" on />
          <ToolButton $w={23} aria-label="Clear filter"><CrossIcon /></ToolButton>
          <Visible>4/1914 visible</Visible>
          <ToolButton $w={22} aria-label="Search"><SearchIcon /></ToolButton>
          <ToolButton $w={30} aria-label="Edit"><PencilIcon /></ToolButton>
          <ToolButton $w={30} aria-label="Add"><RoundIcon plus /></ToolButton>
          <ToolButton $w={57} disabled><DiskIcon off />Drivers</ToolButton>
          <ToolButton $w={57}><FolderIcon />Project</ToolButton>
          <ToolButton $w={18} aria-label="Recent projects">
            <svg width="12" height="10" viewBox="0 0 12 10"><path d="M0 0h12L6 10Z" fill="#333" /></svg>
          </ToolButton>
          <ToolButton $w={57}><DiskIcon />Project</ToolButton>
          <ToolButton $w={48}><ExportIcon />SPL</ToolButton>
          <ToolButton $w={35}><ExportIcon />Z</ToolButton>
          <Check text="Feed spk" />
        </DatabaseBar>
        <FilterArea>
          <GridFrame $h={44}><FilterTable /></GridFrame>
          <Limits>
            <span>Max</span>
            <span>Min</span>
          </Limits>
        </FilterArea>
        <DriverFrame $h={190}><DriverTable /></DriverFrame>
        <Splitter />
        <Lower>
          <Sidebar>
            <DriverConfig />
            <RadiatorRow $cols="64px 1fr" $mt={6}>
              <span>Radiator type</span>
              <Dropdown w={147} label="Radiator type" value="Bass reflex" />
            </RadiatorRow>
            <TabList role="tablist">
              <Tab role="tab" $w={38}>Align</Tab>
              <Tab role="tab" $w={53}>Enclosure</Tab>
              <Tab role="tab" $w={40} $open aria-selected>Filter</Tab>
              <Tab role="tab" $w={33}>Info</Tab>
            </TabList>
            <FilterPage />
          </Sidebar>
          <ChartArea>
            <ChartBar />
            <ChartGrid>
              {charts.map((c) => <Chart key={c.title} spec={c} />)}
            </ChartGrid>
          </ChartArea>
        </Lower>
        <BottomEdge />
      </Window>
    </>
  );
}
